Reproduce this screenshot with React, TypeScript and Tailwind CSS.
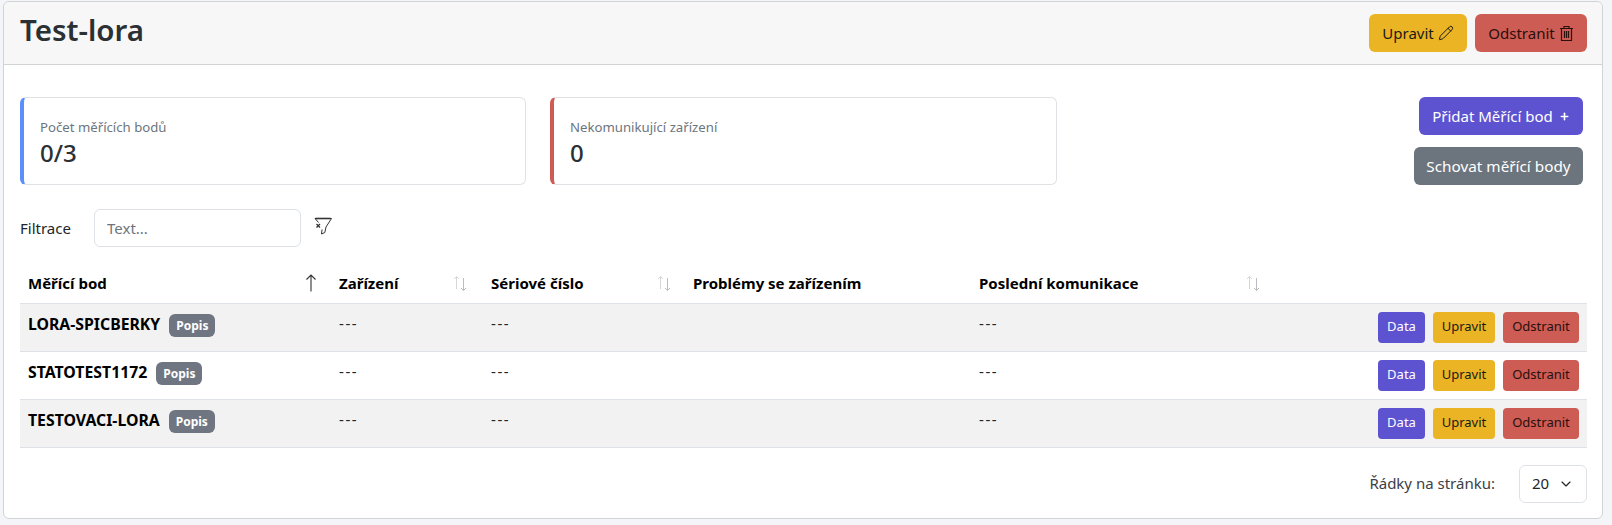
import { Pencil, Plus, ChevronDown } from "lucide-react";

const rows = [
  { name: "LORA-SPICBERKY" },
  { name: "STATOTEST1172" },
  { name: "TESTOVACI-LORA" },
];

function SortIcon() {
  return (
    <svg width="16" height="16" viewBox="0 0 16 16" fill="none" strokeWidth="1">
      <path d="M4.5 14V1.5M2 4l2.5-2.5L7 4" stroke="#d4d6d9" />
      <path d="M11.5 3v12.5M9 13l2.5 2.5L14 13" stroke="#b9bcc0" />
    </svg>
  );
}

function SortedIcon() {
  return (
    <svg width="12" height="18" viewBox="0 0 12 18" fill="none" stroke="#333" strokeWidth="1.1">
      <path d="M6 17.5V1M1.5 5.5L6 1l4.5 4.5" />
    </svg>
  );
}

function FilterXIcon() {
  return (
    <svg width="18" height="18" viewBox="0 0 18 18" fill="none" stroke="#333" strokeWidth="1">
      <path d="M4.5 5.5L1 1.5h16.5L12 10l-1.2 5.5-3.3 1.5.5-4.5" />
      <path d="M1.5 1.5h15" strokeWidth="1.6" />
      <path d="M2.5 7l3.5 3.5M6 7l-3.5 3.5" strokeWidth="1.3" />
    </svg>
  );
}

function TrashIcon() {
  return (
    <svg width="15" height="17" viewBox="0 0 15 17" fill="none" stroke="#2a0f0c" strokeWidth="1.2">
      <path d="M1 3.5h13M5 3.5V1.5h5v2" />
      <path d="M2.5 3.5v12h10v-12" />
      <path d="M5.5 6v7M7.5 6v7M9.5 6v7" />
    </svg>
  );
}

function StatCard({ label, value, border, width }: { label: string; value: string; border: string; width: string }) {
  return (
    <div className={`h-[88px] rounded-md border border-[#dfe1e4] border-l-4 pl-4 pt-[19px] ${width} ${border}`}>
      <div className="text-[13.2px] leading-[21px] text-[#6c757d]">{label}</div>
      <div className="text-[24px] leading-[29px] font-medium text-[#2b3035]">{value}</div>
    </div>
  );
}

function HeadCell({ title, icon, width, pr }: { title: string; icon?: React.ReactNode; width: string; pr: string }) {
  return (
    <th className={`${width} px-2 pb-2 pt-2 text-left align-bottom`}>
      <div className={`flex items-center justify-between text-[15px] font-bold text-black ${pr}`}>
        <span>{title}</span>
        {icon}
      </div>
    </th>
  );
}

export default function App() {
  return (
    <div className="h-[525px] bg-[#f3f5f9] pl-[3px] pr-[9px] pt-px font-['Noto_Sans','Open_Sans',sans-serif] text-[#212529]">
      <div className="h-[518px] rounded-md border border-[#d2d3d5] bg-white">
        <div className="flex h-[63px] items-center justify-between rounded-t-md border-b border-[#d2d3d5] bg-[#f7f7f7] pl-4 pr-[15px]">
          <h1 className="-mt-1.5 text-[29.5px] font-semibold text-[#2b3035]">Test-lora</h1>
          <div className="flex gap-2">
            <button className="flex h-[38px] w-[98px] items-center justify-center gap-1 rounded-md bg-[#ebb424] text-[15px] text-[#1a1a1a]">
              Upravit <Pencil size={16} strokeWidth={1.5} />
            </button>
            <button className="flex h-[38px] w-[112px] items-center justify-center gap-1 rounded-md bg-[#cd5c54] text-[15px] text-[#2a0f0c]">
              Odstranit <TrashIcon />
            </button>
          </div>
        </div>

        <div className="pl-4 pr-[15px] pt-8">
          <div className="flex justify-between">
            <div className="flex gap-[24px]">
              <StatCard label="Počet měřících bodů" value="0/3" border="border-l-[#5b8ffb]" width="w-[506px]" />
              <StatCard label="Nekomunikující zařízení" value="0" border="border-l-[#cd5c54]" width="w-[507px]" />
            </div>
            <div className="mr-1 flex flex-col items-end gap-3">
              <button className="flex h-[38px] w-[164px] items-center justify-center gap-1.5 rounded-md bg-[#5d53d0] text-[15px] text-white">
                Přidat Měřící bod <Plus size={11} strokeWidth={3.5} />
              </button>
              <button className="h-[38px] w-[169px] rounded-md bg-[#6c757d] text-[15.3px] text-white">
                Schovat měřící body
              </button>
            </div>
          </div>

          <div className="mt-6 flex items-center">
            <label className="w-[74px] text-[15px]">Filtrace</label>
            <input
              placeholder="Text..."
              className="h-[38px] w-[207px] rounded-md border border-[#dee2e6] px-3 text-[15px] placeholder:text-[#6c757d]"
            />
            <span className="ml-[13px] -mt-1"><FilterXIcon /></span>
          </div>

          <table className="mt-[17px] w-full table-fixed border-collapse">
            <thead>
              <tr className="border-b border-[#dee2e6]">
                <HeadCell title="Měřící bod" icon={<SortedIcon />} width="w-[311px]" pr="pr-[6px]" />
                <HeadCell title="Zařízení" icon={<SortIcon />} width="w-[152px]" pr="pr-[7px]" />
                <HeadCell title="Sériové číslo" icon={<SortIcon />} width="w-[202px]" pr="pr-[5px]" />
                <HeadCell title="Problémy se zařízením" width="w-[286px]" pr="pr-3" />
                <HeadCell title="Poslední komunikace" icon={<SortIcon />} width="w-[310px]" pr="pr-3" />
                <th />
              </tr>
            </thead>
            <tbody>
              {rows.map((row, i) => (
                <tr key={row.name} className={`h-12 border-b border-[#dee2e6] ${i % 2 === 0 ? "bg-[#f2f2f2]" : "bg-white"}`}>
                  <td className="px-2 pt-2 align-top">
                    <span className="text-[15.8px] font-bold text-black">{row.name}</span>
                    <span className="ml-[9px] rounded-md bg-[#6f7682] px-[7px] py-[3px] text-[12px] font-bold text-white">Popis</span>
                  </td>
                  <td className="px-2 pt-2 align-top text-[15px] tracking-[1.6px]">---</td>
                  <td className="px-2 pt-2 align-top text-[15px] tracking-[1.6px]">---</td>
                  <td />
                  <td className="px-2 pt-2 align-top text-[15px] tracking-[1.6px]">---</td>
                  <td className="pr-2 align-middle">
                    <div className="flex justify-end gap-2">
                      <button className="h-[31px] w-[47px] rounded bg-[#5d53d0] text-[13px] text-white">Data</button>
                      <button className="h-[31px] w-[62px] rounded bg-[#ebb424] text-[13px] text-[#1a1a1a]">Upravit</button>
                      <button className="h-[31px] w-[76px] rounded bg-[#cd5c54] text-[13px] text-[#2a0f0c]">Odstranit</button>
                    </div>
                  </td>
                </tr>
              ))}
            </tbody>
          </table>

          <div className="mt-[17px] flex items-center justify-end">
            <span className="mr-6 text-[15px] text-[#3b4046]">Řádky na stránku:</span>
            <div className="flex h-[38px] w-[68px] items-center justify-between rounded-md border border-[#dee2e6] px-3 text-[15px]">
              20 <ChevronDown size={16} strokeWidth={1.75} />
            </div>
          </div>
        </div>
      </div>
    </div>
  );
}
